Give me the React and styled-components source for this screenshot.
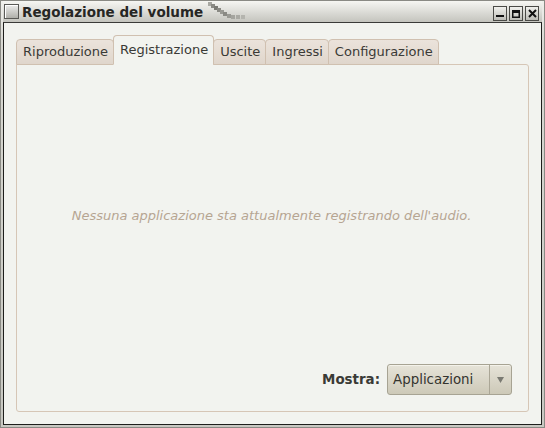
import React, { useState } from 'react'
import styled, { createGlobalStyle } from 'styled-components'

const Global = createGlobalStyle`
    html, body { margin: 0; padding: 0; }
    body { background: #b4b4ae; font-family: "DejaVu Sans", "Liberation Sans", sans-serif; }
`

const Frame = styled.div`
    width: 545px;
    height: 428px;
    box-sizing: border-box;
    display: flex;
    flex-direction: column;
    background: linear-gradient(#f0f0ec, #d8d8d2 10%, #c8c8c2);
    border: 1px solid #8a8a84;
    padding: 0 2px 2px 2px;
`

const TitleBar = styled.div`
    height: 21px;
    display: flex;
    align-items: center;
    gap: 3px;
    padding-left: 1px;
    background: linear-gradient(#f6f6f2, #c4c4be);
`

const WinIcon = styled.div`
    width: 13px;
    height: 13px;
    border: 1px solid #5a5a56;
    background: linear-gradient(#ececea, #b0b0aa);
    box-shadow: inset 1px 1px 0 #fff;
`

const Title = styled.span`
    font-weight: bold;
    font-size: 13.5px;
    color: #262624;
`

const Grip = styled.svg`
    align-self: flex-start;
    margin-left: 2px;
`

const Spacer = styled.div`
    flex: 1;
`

const WinButtons = styled.div`
    display: flex;
    gap: 2px;
    padding-right: 3px;
    align-self: flex-end;
    margin-bottom: 1px;
`

const WinButton = styled.div`
    width: 14px;
    height: 15px;
    box-sizing: border-box;
    border: 1px solid #4a4a46;
    background: linear-gradient(#f0f0ec, #bcbcb6);
    display: flex;
    align-items: center;
    justify-content: center;
`

const Client = styled.div`
    flex: 1;
    background: #f2f3ef;
    border: 1px solid #1e1e1c;
    border-top: 1px solid #3a3a38;
    padding: 12px 12px 12px 12px;
    display: flex;
    flex-direction: column;
`

const Tabs = styled.div`
    display: flex;
    align-items: flex-end;
    height: 30px;
    position: relative;
    z-index: 1;
    margin-bottom: -1px;
`

const Tab = styled.div`
    box-sizing: border-box;
    height: ${p => p.$active ? 30 : 26}px;
    padding: 0 5px 0 6px;
    padding-bottom: ${p => p.$active ? 2 : 1}px;
    display: flex;
    align-items: center;
    font-size: 13px;
    color: #3a3a36;
    background: ${p => p.$active ? '#f2f3ef' : 'linear-gradient(#ebe3db, #e0d6cc)'};
    border: 1px solid #d0c0b0;
    border-bottom: ${p => p.$active ? '1px solid #f2f3ef' : '1px solid #d0c0b0'};
    border-radius: 4px 4px 0 0;
    margin-left: ${p => p.$first ? 0 : -1}px;
    cursor: default;
`

const Panel = styled.div`
    flex: 1;
    border: 1px solid #d6c6b6;
    border-radius: 0 3px 3px 3px;
    display: flex;
    flex-direction: column;
    padding: 0 16px 16px 0;
`

const Empty = styled.div`
    flex: 1;
    display: flex;
    align-items: center;
    justify-content: center;
    font-style: italic;
    font-size: 13px;
    color: #b6a592;
    padding-top: 2px;
    padding-left: 14px;
`

const Footer = styled.div`
    display: flex;
    justify-content: flex-end;
    align-items: center;
    gap: 7px;
`

const Label = styled.span`
    font-weight: bold;
    font-size: 13.4px;
    color: #3a3a36;
`

const Combo = styled.div`
    width: 125px;
    height: 31px;
    box-sizing: border-box;
    display: flex;
    border: 1px solid #a7a393;
    border-radius: 3px;
    background: linear-gradient(#e6e3d8, #cdc9b8);
    box-shadow: inset 0 1px 0 #f4f2ea;
`

const ComboText = styled.div`
    flex: 1;
    display: flex;
    align-items: center;
    padding-left: 5px;
    font-size: 13.4px;
    color: #34342f;
    border-right: 1px solid #aaa696;
`

const ComboArrow = styled.div`
    width: 21px;
    display: flex;
    align-items: center;
    justify-content: center;
`

const tabs = ['Riproduzione', 'Registrazione', 'Uscite', 'Ingressi', 'Configurazione']

const gripBlocks = [
    [0, 0, '#a8a8a2'], [3, 2, '#8a8a84'], [6, 4, '#7a7a74'], [9, 6, '#8a8a84'],
    [12, 8, '#9a9a94'], [15, 10, '#8a8a84'], [19, 12, '#9a9a94'], [23, 13, '#a4a49e'],
    [28, 13, '#aaaaa4'], [33, 13, '#b4b4ae'],
]

export default function App() {
    const [active, setActive] = useState(1)

    return (
        <>
            <Global />
            <Frame>
                <TitleBar>
                    <WinIcon />
                    <Title>Regolazione del volume</Title>
                    <Grip width="40" height="20" viewBox="0 0 40 20">
                        {gripBlocks.map(([x, y, c], i) => (
                            <rect key={i} x={x} y={y + 1} width="4" height="4" fill={c} />
                        ))}
                    </Grip>
                    <Spacer />
                    <WinButtons>
                        <WinButton>
                            <svg width="8" height="8" viewBox="0 0 8 8"><rect x="0" y="5" width="8" height="2" fill="#111" /></svg>
                        </WinButton>
                        <WinButton>
                            <svg width="8" height="8" viewBox="0 0 8 8"><rect x="0.75" y="0.75" width="6.5" height="6.5" fill="none" stroke="#111" strokeWidth="1.5" /><rect x="0" y="0" width="8" height="3" fill="#111" /></svg>
                        </WinButton>
                        <WinButton>
                            <svg width="9" height="9" viewBox="0 0 9 9"><path d="M1 1 L8 8 M8 1 L1 8" stroke="#111" strokeWidth="2" /></svg>
                        </WinButton>
                    </WinButtons>
                </TitleBar>
                <Client>
                    <Tabs>
                        {tabs.map((t, i) => (
                            <Tab key={t} $active={i === active} $first={i === 0} onClick={() => setActive(i)}>{t}</Tab>
                        ))}
                    </Tabs>
                    <Panel>
                        <Empty>Nessuna applicazione sta attualmente registrando dell'audio.</Empty>
                        <Footer>
                            <Label>Mostra:</Label>
                            <Combo>
                                <ComboText>Applicazioni</ComboText>
                                <ComboArrow>
                                    <svg width="7" height="6" viewBox="0 0 7 6"><path d="M0 0 L7 0 L3.5 6 Z" fill="#7a7a72" /></svg>
                                </ComboArrow>
                            </Combo>
                        </Footer>
                    </Panel>
                </Client>
            </Frame>
        </>
    )
}
